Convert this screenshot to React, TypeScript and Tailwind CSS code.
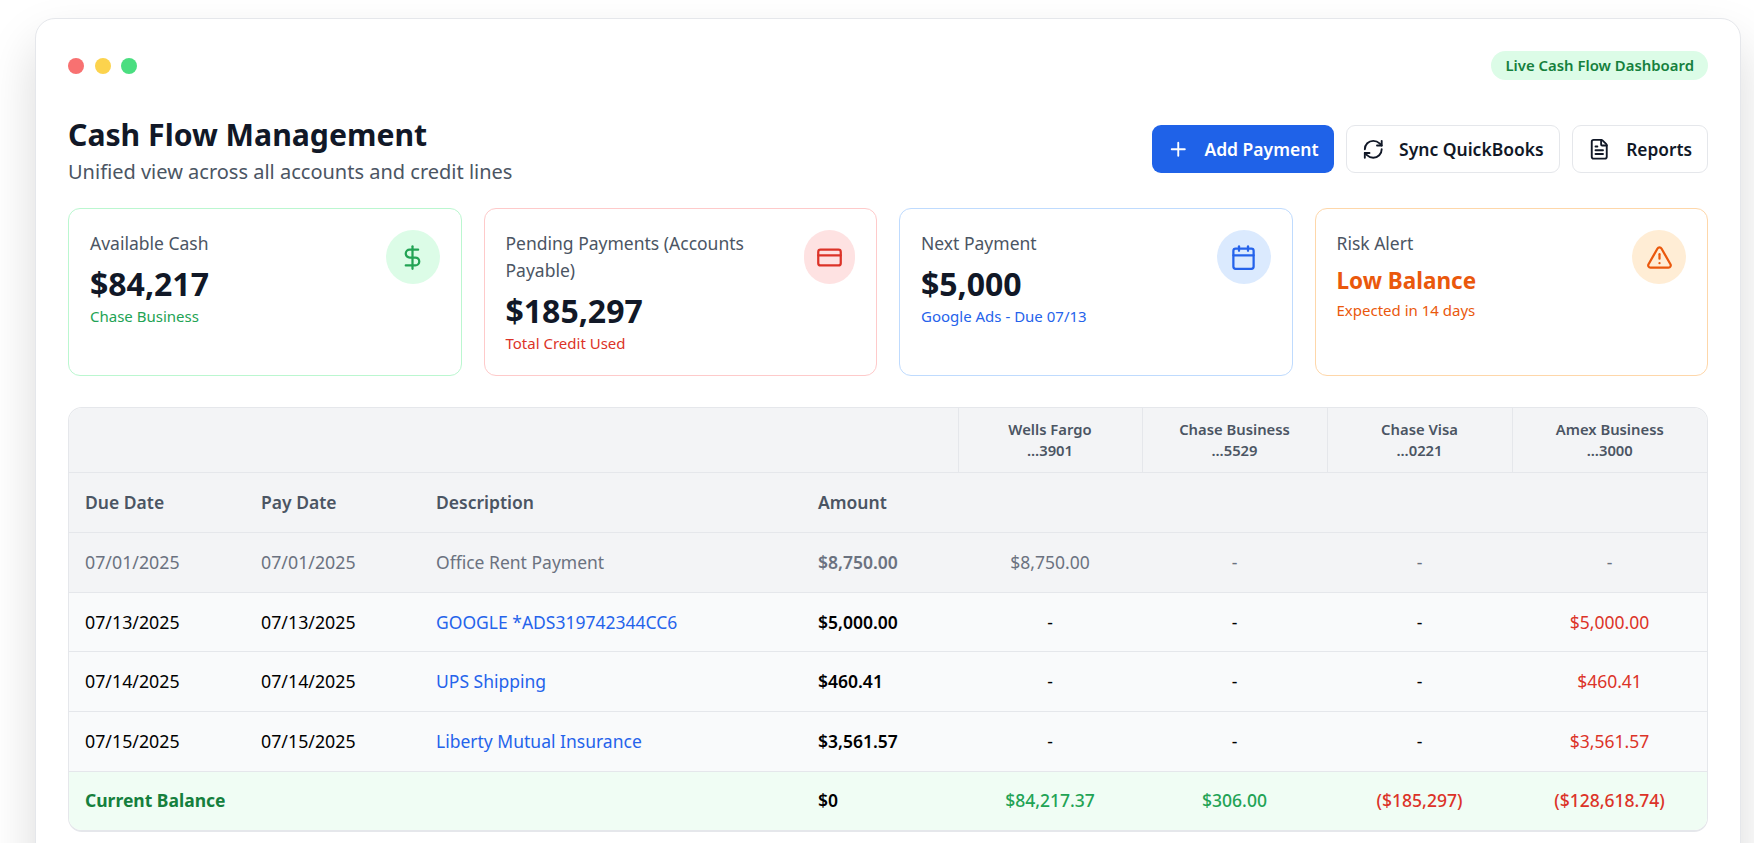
import { Plus, RefreshCw, FileText, DollarSign, CreditCard, Calendar, TriangleAlert } from "lucide-react";

const stats = [
  { t: "Available Cash", v: "$84,217", s: "Chase Business", border: "border-[#bbf7d0]", sub: "text-[#22a354]", bg: "bg-[#dcfce7]", ic: "text-[#22a354]", I: DollarSign },
  { t: "Pending Payments (Accounts Payable)", v: "$185,297", s: "Total Credit Used", border: "border-[#fecaca]", sub: "text-[#dc3328]", bg: "bg-[#fee2e2]", ic: "text-[#dc3328]", I: CreditCard },
  { t: "Next Payment", v: "$5,000", s: "Google Ads - Due 07/13", border: "border-[#bfdbfe]", sub: "text-[#2563eb]", bg: "bg-[#dbeafe]", ic: "text-[#2563eb]", I: Calendar },
];

const rows = [
  ["07/13/2025", "GOOGLE *ADS319742344CC6", "$5,000.00"],
  ["07/14/2025", "UPS Shipping", "$460.41"],
  ["07/15/2025", "Liberty Mutual Insurance", "$3,561.57"],
];

const accts = [["Wells Fargo", "...3901"], ["Chase Business", "...5529"], ["Chase Visa", "...0221"], ["Amex Business", "...3000"]];

export default function App() {
  return (
    <div className="h-[843px] overflow-hidden bg-white pl-[35px] pr-[13px] pt-[18px] font-['Noto_Sans','Open_Sans',sans-serif] text-[17.5px] leading-[27px] text-[#111827]">
      <div className="min-h-[900px] rounded-[20px] border border-[#e5e7eb] bg-white p-8 shadow-[0_25px_50px_rgba(0,0,0,0.15)]">
        <div className="flex h-[29px] items-center justify-between">
          <div className="flex gap-[10.5px]">
            <span className="h-4 w-4 rounded-full bg-[#f87171]" />
            <span className="h-4 w-4 rounded-full bg-[#fcd34d]" />
            <span className="h-4 w-4 rounded-full bg-[#4ade80]" />
          </div>
          <span className="rounded-full bg-[#dcfce7] px-[14px] text-[14.9px] font-semibold leading-[29px] text-[#15803d]">Live Cash Flow Dashboard</span>
        </div>
        <div className="mt-[37px] flex items-start justify-between">
          <div>
            <h1 className="text-[30.2px] font-bold leading-[36px] text-[#111827]">Cash Flow Management</h1>
            <p className="mt-[5px] text-[20px] leading-[28px] text-[#4b5563]">Unified view across all accounts and credit lines</p>
          </div>
          <div className="mt-2 flex gap-3">
            <button className="flex h-12 items-center gap-[15px] rounded-[9px] bg-[#1f62e8] px-[15px] font-semibold text-white"><Plus size={22.5} strokeWidth={2} />Add Payment</button>
            <button className="flex h-12 items-center gap-[15px] rounded-[9px] border border-[#e5e7eb] bg-white px-[15px] font-semibold text-[#111827]"><RefreshCw size={22.5} strokeWidth={2} />Sync QuickBooks</button>
            <button className="flex h-12 items-center gap-[16px] rounded-[9px] border border-[#e5e7eb] bg-white pl-[15px] pr-[15px] font-semibold text-[#111827]"><FileText size={22.5} strokeWidth={2} /><span className="text-[17.3px]">Reports</span></button>
          </div>
        </div>
        <div className="mt-[22px] grid grid-cols-4 gap-[22px]">
          {stats.map(({ t, v, s, border, sub, bg, ic, I }) => (
            <div key={t} className={`flex items-start justify-between rounded-xl border ${border} h-[168px] p-[21px]`}>
              <div>
                <div className="text-[#4b5563]">{t}</div>
                <div className="pt-[6px] text-[32px] font-bold leading-[41px] text-[#111827]">{v}</div>
                <div className={`text-[15px] leading-[24px] ${sub}`}>{s}</div>
              </div>
              <div className={`flex h-[54px] w-[54px] items-center justify-center rounded-full ${bg} ${ic}`}><I size={27} /></div>
            </div>
          ))}
          <div className="flex h-[168px] items-start justify-between rounded-xl border border-[#fed7aa] p-[21px]">
            <div>
              <div className="text-[#4b5563]">Risk Alert</div>
              <div className="pt-[7px] text-[22.5px] font-bold leading-[34px] text-[#ea580c]">Low Balance</div>
              <div className="text-[15px] leading-[24px] text-[#ea580c]">Expected in 14 days</div>
            </div>
            <div className="flex h-[54px] w-[54px] items-center justify-center rounded-full bg-[#ffedd5] text-[#ea580c]"><TriangleAlert size={27} /></div>
          </div>
        </div>
        <div className="mt-[31px] overflow-hidden rounded-[14px] border border-b-2 border-[#e5e7eb]">
          <table className="w-full table-fixed border-collapse leading-[26.8px]">
            <colgroup>
              <col className="w-[176px]" /><col className="w-[175px]" /><col className="w-[382px]" /><col className="w-[156px]" /><col className="w-[184px]" /><col className="w-[185px]" /><col className="w-[185px]" /><col />
            </colgroup>
            <thead className="bg-[#f3f4f6]">
              <tr className="border-b border-[#e5e7eb]">
                <th colSpan={4} />
                {accts.map(([a, b]) => (
                  <th key={a} className="border-l border-[#e5e7eb] py-[11px] text-center text-[14.8px] font-semibold leading-[21px] text-[#4b5563]">{a}<br />{b}</th>
                ))}
              </tr>
              <tr className="border-b border-[#e5e7eb]">
                {["Due Date", "Pay Date", "Description", "Amount"].map((h) => (
                  <th key={h} className="px-4 py-4 text-left font-semibold text-[#4b5563]">{h}</th>
                ))}
                <th colSpan={4} />
              </tr>
            </thead>
            <tbody>
              <tr className="border-b border-[#e5e7eb] bg-[#f3f4f6] text-[#6b7280]">
                <td className="px-4 py-4 text-[17.8px]">07/01/2025</td>
                <td className="px-4 py-4 text-[17.8px]">07/01/2025</td>
                <td className="px-4 py-4">Office Rent Payment</td>
                <td className="px-4 py-4 font-semibold">$8,750.00</td>
                <td className="py-4 text-center">$8,750.00</td>
                <td className="py-4 text-center">-</td>
                <td className="py-4 text-center">-</td>
                <td className="py-4 text-center">-</td>
              </tr>
              {rows.map(([d, desc, amt]) => (
                <tr key={d} className="border-b border-[#e5e7eb] bg-[#f9fafb] text-black">
                  <td className="px-4 py-4 text-[17.8px]">{d}</td>
                  <td className="px-4 py-4 text-[17.8px]">{d}</td>
                  <td className="px-4 py-4 text-[#2563eb]">{desc}</td>
                  <td className="px-4 py-4 font-semibold">{amt}</td>
                  <td className="py-4 text-center">-</td>
                  <td className="py-4 text-center">-</td>
                  <td className="py-4 text-center">-</td>
                  <td className="py-4 text-center text-[#dc3328]">{amt}</td>
                </tr>
              ))}
              <tr className="bg-[#f0fdf4]">
                <td colSpan={3} className="px-4 py-[15.5px] font-bold text-[#15803d]">Current Balance</td>
                <td className="px-4 py-[15.5px] font-semibold text-black">$0</td>
                <td className="py-[15.5px] text-center font-medium text-[#22a354]">$84,217.37</td>
                <td className="py-[15.5px] text-center font-medium text-[#22a354]">$306.00</td>
                <td className="py-[15.5px] text-center font-medium text-[#dc3328]">($185,297)</td>
                <td className="py-[15.5px] text-center font-medium text-[#dc3328]">($128,618.74)</td>
              </tr>
            </tbody>
          </table>
        </div>
      </div>
    </div>
  );
}
